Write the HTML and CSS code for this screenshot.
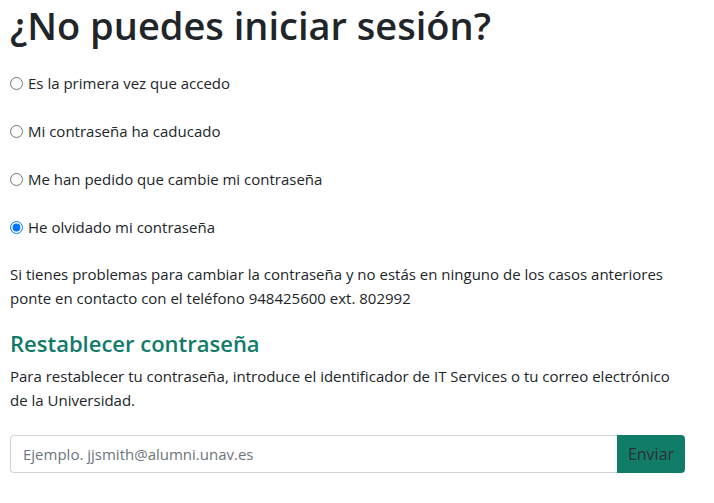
FILE: index.html
```html
<!DOCTYPE html>
<html lang="es">
<head>
    <meta charset="UTF-8">
    <meta name="viewport" content="width=device-width, initial-scale=1.0">
    <title>¿No puedes iniciar sesión?</title>
    <link rel="stylesheet" href="styles.css">
</head>
<body>
    <div class="page">
        <h1 class="title">¿No puedes iniciar sesión?</h1>

        <div class="options">
            <label class="option"><input type="radio" name="motivo"> Es la primera vez que accedo</label>
            <label class="option"><input type="radio" name="motivo"> Mi contraseña ha caducado</label>
            <label class="option"><input type="radio" name="motivo"> Me han pedido que cambie mi contraseña</label>
            <label class="option"><input type="radio" name="motivo" checked> He olvidado mi contraseña</label>
        </div>

        <p class="help">Si tienes problemas para cambiar la contraseña y no estás en ninguno de los casos anteriores ponte en contacto con el teléfono 948425600 ext. 802992</p>

        <h2 class="subtitle">Restablecer contraseña</h2>
        <p class="help intro">Para restablecer tu contraseña, introduce el identificador de IT Services o tu correo electrónico de la Universidad.</p>

        <form class="input-group" onsubmit="return false">
            <input type="text" class="field" placeholder="Ejemplo. jjsmith@alumni.unav.es">
            <button type="submit" class="send">Enviar</button>
        </form>
    </div>
</body>
</html>
```

FILE: styles.css
```css
body {
    margin: 0;
    font-family: 'Open Sans', 'Noto Sans', sans-serif;
    color: #212529;
    background-color: #fff;
}

.page {
    padding: 0 10px;
    width: 675px;
}

.title {
    font-size: 38px;
    font-weight: 600;
    line-height: 50px;
    margin: 0 0 21px;
}

.options {
    display: flex;
    flex-direction: column;
    gap: 24px;
}

.option {
    display: flex;
    align-items: center;
    height: 24px;
    font-size: 15px;
}

.option input {
    margin: 0 5px 0 0;
    width: 13px;
    height: 13px;
}

.help {
    font-size: 15px;
    line-height: 24px;
    margin: 23px 0 19px;
}

.subtitle {
    font-size: 22px;
    font-weight: 600;
    line-height: 29px;
    color: #117a68;
    margin: 0 0 6px;
}

.help.intro {
    margin: 0 0 23px;
}

.input-group {
    display: flex;
    height: 38px;
}

.field {
    flex: 1;
    border: 1px solid #ced4da;
    border-right: none;
    border-radius: 4px 0 0 4px;
    padding: 0 12px;
    font-family: inherit;
    font-size: 15px;
    color: #212529;
}

.field::placeholder {
    color: #6c757d;
}

.send {
    width: 68px;
    border: none;
    border-radius: 0 4px 4px 0;
    background-color: #117d69;
    color: #2b3035;
    font-family: inherit;
    font-size: 16px;
}
```
